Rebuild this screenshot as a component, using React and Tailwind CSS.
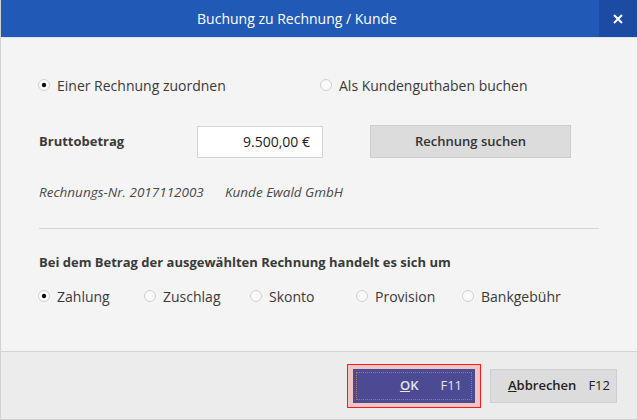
import React from 'react';

const Radio = ({ checked, label, className = '' }) => (
  <div className={`flex items-center gap-[7px] ${className}`}>
    <svg width="12" height="12" viewBox="0 0 12 12">
      <circle cx="6" cy="6" r="5.5" fill="#fafafa" stroke="#cfcfcf" />
      {checked && <circle cx="6" cy="6" r="2.2" fill="#111" />}
    </svg>
    <span>{label}</span>
  </div>
);

const App = () => {
  return (
    <div className="w-[638px] h-[420px] flex flex-col bg-[#f4f4f4] border-x border-b border-[#d2d2d2] text-[14px] text-[#3a3a3a] font-['Open_Sans',sans-serif] overflow-hidden">
      {/* Title bar */}
      <div className="h-[38px] flex bg-[#215ab6] border-b border-[#dfe6f0] shrink-0">
        <div className="flex-1 flex items-center justify-center text-white text-[14px] pr-[6px]">
          Buchung zu Rechnung / Kunde
        </div>
        <div className="w-[38px] flex items-center justify-center bg-[#1b4ba3] text-white">
          <svg width="10" height="10" viewBox="0 0 10 10">
            <path d="M1 1 L9 9 M9 1 L1 9" stroke="white" strokeWidth="2" />
          </svg>
        </div>
      </div>

      {/* Body */}
      <div className="flex-1 px-[38px] pt-[37px]">
        <div className="flex h-[20px] items-center">
          <Radio checked label="Einer Rechnung zuordnen" className="w-[282px] -ml-[1px]" />
          <Radio label="Als Kundenguthaben buchen" />
        </div>

        <div className="flex items-center mt-[30px] h-[33px] text-[13px]">
          <div className="w-[158px] font-bold">Bruttobetrag</div>
          <div className="w-[126px] h-[32px] bg-white border border-[#d4d4d4] flex items-center justify-end pr-[12px] text-[#222] text-[14px]">
            9.500,00 €
          </div>
          <button className="ml-[47px] w-[201px] h-[33px] bg-[#dcdcdc] border border-[#cdcdcd] font-semibold text-[#333]">
            Rechnung suchen
          </button>
        </div>

        <div className="flex items-center mt-[24px] h-[20px] italic text-[13.5px] text-[#4a4a4a]">
          <span className="w-[186px]">Rechnungs-Nr. 2017112003</span>
          <span>Kunde Ewald GmbH</span>
        </div>

        <div className="mt-[26px] border-t border-[#d6d6d6]" />

        <div className="mt-[24px] h-[20px] flex items-center font-bold text-[13px]">
          Bei dem Betrag der ausgewählten Rechnung handelt es sich um
        </div>

        <div className="mt-[13px] h-[20px] flex items-center">
          <Radio checked label="Zahlung" className="w-[106px] -ml-[1px]" />
          <Radio label="Zuschlag" className="w-[106px]" />
          <Radio label="Skonto" className="w-[106px]" />
          <Radio label="Provision" className="w-[106px]" />
          <Radio label="Bankgebühr" />
        </div>
      </div>

      {/* Footer */}
      <div className="h-[68px] shrink-0 bg-[#ececec] border-t border-[#d4d4d4] flex items-center justify-end pr-[20px] gap-[9px] text-[13px]">
        <div className="border border-[#ff1a1a] bg-[#f3c4c4] px-[5px] py-[4px]">
          <button className="w-[122px] h-[34px] bg-[#4b4a93] text-[#e6e4f4] flex items-center justify-end pr-[13px] gap-[22px] outline-1 outline-dotted outline-[#b0794a] -outline-offset-4">
            <span className="font-semibold"><span className="underline">O</span>K</span>
            <span>F11</span>
          </button>
        </div>
        <button className="w-[127px] h-[34px] bg-[#dcdcdc] border border-[#cfcfcf] flex items-center pl-[17px] gap-[12px] text-[#222]">
          <span className="font-semibold"><span className="underline">A</span>bbrechen</span>
          <span>F12</span>
        </button>
      </div>
    </div>
  );
};

export default App;
